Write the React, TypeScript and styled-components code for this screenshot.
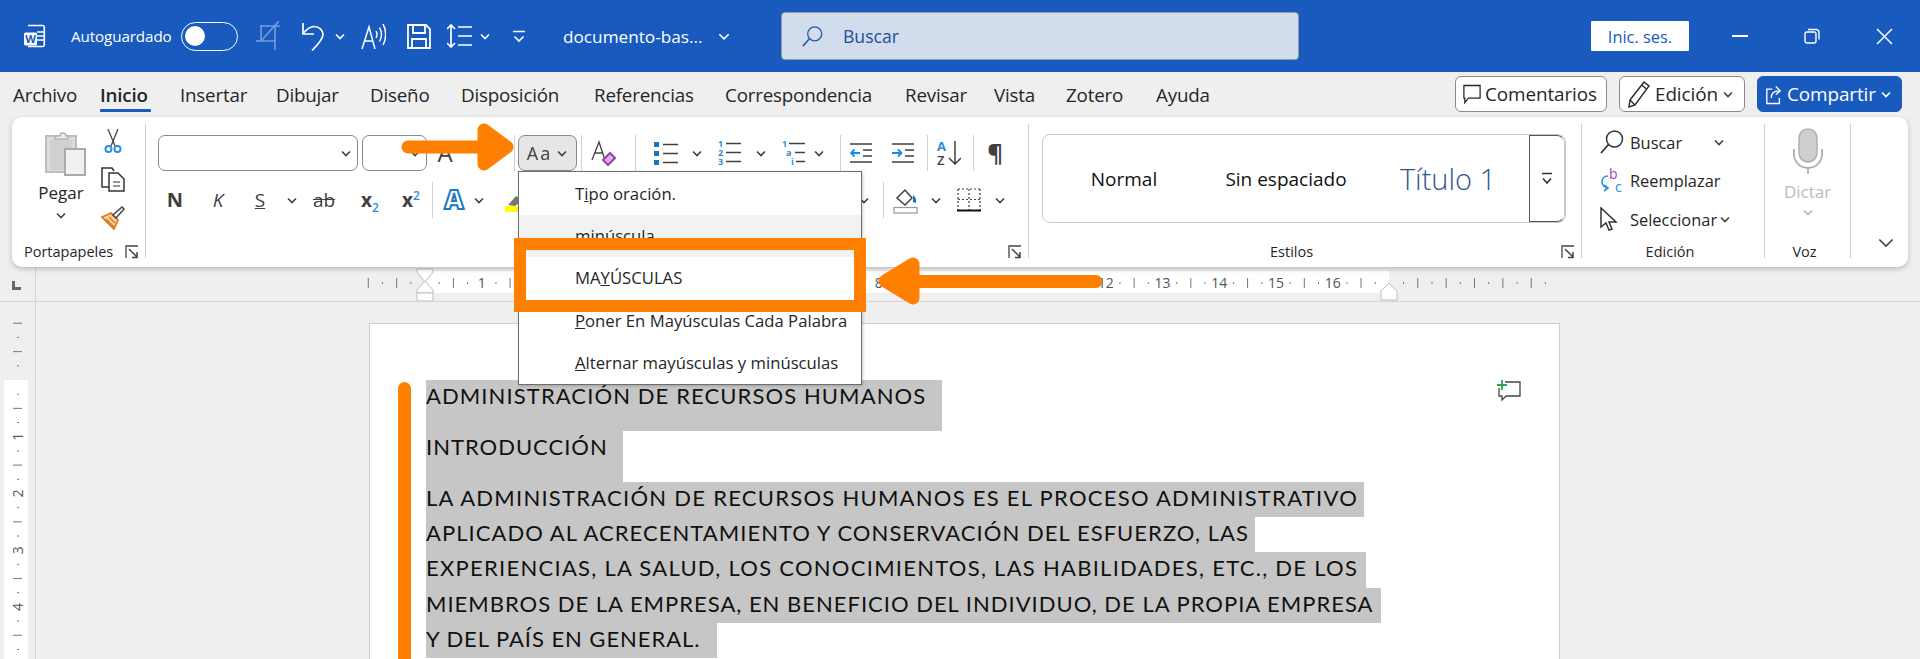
import React from 'react';
import styled, { createGlobalStyle } from 'styled-components';

const ORANGE = '#ff8000';
const Global = createGlobalStyle`
  html, body { margin: 0; padding: 0; background: #efefef; }
  body { font-family: "Open Sans", "Liberation Sans", sans-serif; color: #262626; overflow: hidden; }
  * { box-sizing: border-box; }
`;
const Screen = styled.div`position: relative; width: 1920px; height: 659px; overflow: hidden; display: flex; flex-direction: column; background: #efefef;`;
const TitleBar = styled.header`flex: none; height: 72px; background: #185abd; color: #fff; display: flex; align-items: center; padding-left: 24px;`;
const AutoLabel = styled.span`width: 110px; margin-left: 23px; font-size: 15.2px; letter-spacing: -0.1px; white-space: nowrap;`;
const Toggle = styled.div`width: 57px; height: 29px; border: 1.5px solid #fff; border-radius: 15px; padding: 3px; display: flex; align-items: center;`;
const Knob = styled.span`width: 20px; height: 20px; border-radius: 50%; background: #fff;`;
const Qat = styled.span<{ $ml: number; $w: number; $dim?: boolean }>`
  flex: none; margin-left: ${p => p.$ml}px; width: ${p => p.$w}px; display: flex; justify-content: center; align-items: center; opacity: ${p => (p.$dim ? 0.4 : 1)};
`;
const DocTitle = styled.span`margin-left: 38px; width: 154px; font-size: 17.2px; white-space: nowrap;`;
const SearchBox = styled.div`margin-left: 50px; width: 518px; height: 48px; background: #d1dcec; border: 1.5px solid #8f9aab; border-radius: 4px; display: flex; align-items: center; padding-left: 20px; gap: 20px; color: #1d4f9c; font-size: 17.6px;`;
const SignIn = styled.button`margin-left: auto; width: 98px; height: 30px; border: none; background: #fff; color: #185abd; font: 16.4px "Open Sans", sans-serif; padding: 0; border-radius: 1px;`;
const WindowButtons = styled.div`margin-left: 15px; width: 216px; display: flex; padding-left: 0; align-items: center;`;
const WinBtn = styled.span`width: 72px; display: flex; justify-content: center;`;

const MenuBar = styled.nav`flex: none; height: 45px; display: flex; align-items: flex-start; padding-left: 13px; padding-right: 18px;`;
const Tab = styled.a<{ $w: number; $active?: boolean }>`
  width: ${p => p.$w}px; height: 45px; padding-top: 10px; font-size: 18.8px; line-height: 27px; color: #262626; flex: none; letter-spacing: -0.2px; white-space: nowrap;
  font-weight: ${p => (p.$active ? 600 : 400)};
`;
const TabLine = styled.span`display: block; width: 51px; height: 3px; background: #185abd; border-radius: 1px;`;
const MenuActions = styled.div`margin-left: auto; margin-top: 4px; display: flex; gap: 12px;`;
const ActionBtn = styled.div<{ $w: number; $primary?: boolean }>`
  width: ${p => p.$w}px; height: 36px; border-radius: 6px; display: flex; align-items: center; gap: 4px; padding-left: 7px; font-size: 18.9px; letter-spacing: -0.1px; white-space: nowrap;
  border: 1px solid ${p => (p.$primary ? '#185abd' : '#8a8a8a')};
  background: ${p => (p.$primary ? '#185abd' : '#fff')};
  color: ${p => (p.$primary ? '#fff' : '#262626')};
`;

const Ribbon = styled.section`flex: none; margin: 0 12px; height: 150px; background: #fff; border-radius: 10px; box-shadow: 0 2px 5px rgba(0,0,0,.22); display: flex; padding-top: 7px; position: relative; z-index: 2;`;
const Group = styled.div<{ $w: number; $last?: boolean }>`
  flex: none; width: ${p => p.$w}px; height: 134px; display: flex; flex-direction: column;
  border-right: ${p => (p.$last ? 'none' : '1px solid #d0d0d0')};
`;
const GroupBody = styled.div<{ $pt?: number; $pl?: number }>`flex: 1; min-height: 0; padding-top: ${p => p.$pt ?? 0}px; padding-left: ${p => p.$pl ?? 0}px;`;
const Footer = styled.div<{ $left?: number }>`
  flex: none; height: 14px; margin-bottom: -1px; display: grid; align-items: center; padding-right: 6px; font-size: 14.5px; color: #262626; line-height: 14px;
  grid-template-columns: ${p => (p.$left !== undefined ? `${p.$left}px auto 1fr` : '1fr auto 1fr')};
`;
const FooterEnd = styled.span`justify-self: end; display: flex;`;

const Cols = styled.div`display: flex; padding-left: 14px;`;
const PasteCol = styled.div`width: 70px; display: flex; flex-direction: column; align-items: center; padding-top: 6px; font-size: 17px;`;
const PasteArt = styled.span`width: 50px; padding-left: 8px; display: flex;`;
const PasteText = styled.span`margin-top: 6px; line-height: 22px;`;
const ChevWrap = styled.span<{ $mt?: number }>`display: flex; margin-top: ${p => p.$mt ?? 0}px;`;
const SmallCol = styled.div`width: 34px; display: flex; flex-direction: column; gap: 7px;`;
const SmallTool = styled.span`height: 32px; display: flex; align-items: center; justify-content: center;`;

const ToolRow = styled.div<{ $mt?: number }>`display: flex; align-items: center; height: 36px; margin-top: ${p => p.$mt ?? 0}px;`;
const Combo = styled.div<{ $w: number; $ml?: number }>`flex: none; width: ${p => p.$w}px; margin-left: ${p => p.$ml ?? 0}px; height: 36px; border: 1px solid #8a8a8a; border-radius: 7px; display: flex; justify-content: flex-end; align-items: center; padding-right: 5px;`;
const Tool = styled.span<{ $ml?: number; $w: number }>`
  flex: none; margin-left: ${p => p.$ml ?? 0}px; width: ${p => p.$w}px; display: flex; justify-content: center; align-items: center; color: #404040; white-space: nowrap;
`;
const Glyph = styled.span<{ $size?: number; $bold?: boolean; $italic?: boolean; $u?: boolean; $strike?: boolean }>`
  font-size: ${p => p.$size ?? 19}px; line-height: 1; font-weight: ${p => (p.$bold ? 700 : 400)}; font-style: ${p => (p.$italic ? 'italic' : 'normal')};
  text-decoration: ${p => (p.$u ? 'underline' : p.$strike ? 'line-through' : 'none')}; color: #404040;
`;
const Sub = styled.sub`font-size: 12px; color: #2b8fd6; font-weight: 600; line-height: 0;`;
const Sup = styled.sup`font-size: 12px; color: #2b8fd6; font-weight: 600; line-height: 0;`;
const VSep = styled.span<{ $ml: number }>`flex: none; width: 1px; height: 36px; margin-left: ${p => p.$ml}px; background: #d0d0d0;`;
const CaseBtn = styled.div`flex: none; margin-left: 3px; width: 59px; height: 36px; background: #e6e6e6; border: 1px solid #8a8a8a; border-radius: 7px; display: flex; align-items: center; justify-content: center; gap: 4px; font-size: 18px; letter-spacing: 2px; color: #404040;`;

const StyleBox = styled.div`width: 524px; height: 89px; border: 1px solid #c8c8c8; border-radius: 8px; display: flex; align-items: center; overflow: hidden;`;
const StyleCell = styled.span<{ $w: number; $title?: boolean }>`
  width: ${p => p.$w}px; text-align: center; white-space: nowrap; color: ${p => (p.$title ? '#2f5496' : '#111')};
  font-size: ${p => (p.$title ? 29 : 19)}px; font-weight: ${p => (p.$title ? 300 : 400)};
`;
const StyleScroll = styled.span`margin-left: auto; width: 36px; align-self: stretch; border: 1px solid #555; border-right-color: #c8c8c8; border-radius: 0 8px 8px 0; display: flex; align-items: center; justify-content: center;`;

const EditRows = styled.div`display: flex; flex-direction: column; gap: 2.5px; padding-left: 18px;`;
const EditRow = styled.div`height: 36px; display: flex; align-items: center; font-size: 16.4px; color: #262626;`;
const EditIcon = styled.span`width: 30px; display: flex;`;
const EditChev = styled.span<{ $ml: number }>`margin-left: ${p => p.$ml}px; display: flex;`;
const VoiceCol = styled.div`display: flex; flex-direction: column; align-items: center; padding-top: 4px; font-size: 17px; color: #bcbcbc;`;
const VoiceText = styled.span`margin-top: 7px; line-height: 22px;`;
const VoiceLabel = styled.span`text-align: center; grid-column: 1 / -1; font-size: 14.5px;`;
const CollapseBox = styled.div`height: 100%; display: flex; align-items: flex-end; justify-content: flex-end; padding: 0 12px 6px 0;`;

const RulerRow = styled.div`flex: none; height: 35px; display: flex; border-bottom: 1px solid #d4d4d4;`;
const RulerCorner = styled.div`flex: none; width: 36px; border-right: 1px solid #d4d4d4; padding: 14px 0 0 12px;`;
const CornerMark = styled.span`display: block; width: 9px; height: 9px; border-left: 3px solid #666; border-bottom: 3px solid #666;`;
const Workspace = styled.div`flex: 1; min-height: 0; display: flex;`;
const VRulerCol = styled.div`flex: none; width: 36px; border-right: 1px solid #d4d4d4;`;
const Canvas = styled.main`flex: 1; padding: 21px 0 0 333px;`;
const PageSheet = styled.article`position: relative; width: 1191px; height: 500px; background: #fff; border: 1px solid #cfcfcf; padding: 56px 0 0 56px; font-family: "Lato", "Liberation Sans", sans-serif; font-size: 22px; color: #111;`;
const SelLine = styled.div<{ $w: number; $h?: number; $ls?: number }>`
  width: ${p => p.$w}px; height: ${p => p.$h ?? 35.2}px; background: #c6c6c6; white-space: nowrap; line-height: 31.5px; letter-spacing: ${p => p.$ls ?? 0}px;
`;
const OrangeBar = styled.span`position: absolute; left: 28px; top: 58px; width: 13px; height: 500px; background: ${ORANGE}; border-radius: 7px;`;
const CommentAdd = styled.span`position: absolute; left: 1127px; top: 56px; display: flex;`;

const CaseMenu = styled.div`position: absolute; z-index: 5; left: 518px; top: 171px; width: 344px; height: 214px; background: #fff; border: 1px solid #6e6e6e; box-shadow: 1px 1px 3px rgba(0,0,0,.2); padding-top: 1px;`;
const CaseItem = styled.div<{ $hover?: boolean }>`height: 42.2px; line-height: 42px; padding-left: 56px; font-size: 16.7px; color: #262626; white-space: nowrap; background: ${p => (p.$hover ? '#f2f2f2' : '#fff')};`;
const Highlight = styled.div`position: absolute; z-index: 6; left: 514px; top: 238px; width: 352px; height: 74px; border: 12.5px solid ${ORANGE};`;
const Arrow = styled.svg<{ $left: number; $top: number }>`position: absolute; z-index: 7; left: ${p => p.$left}px; top: ${p => p.$top}px; overflow: visible;`;

const Chev = ({ c = '#404040', s = 12 }: { c?: string; s?: number }) => (
  <svg width={s} height={s} viewBox="0 0 12 12" fill="none" stroke={c} strokeWidth={(1.6 * 12) / s}><polyline points="2,4.5 6,8.5 10,4.5" /></svg>
);
const Launcher = () => (
  <svg width="14" height="14" viewBox="0 0 14 14" fill="none" stroke="#444" strokeWidth="1.3"><path d="M1 13V1h12" /><path d="M4 4l8 8M12 7v5.5H7" strokeWidth="1.5" /></svg>
);
const WordLogo = () => (
  <svg width="24" height="24" viewBox="0 0 24 24">
    <path d="M4 1.5h14.5a1.8 1.8 0 0 1 1.8 1.8v17.4a1.8 1.8 0 0 1-1.8 1.8H4" fill="none" stroke="#fff" strokeWidth="1.6" />
    <path d="M13 8h7M13 12h7M13 16h7" stroke="#fff" strokeWidth="1.3" />
    <rect x="0" y="8.5" width="13" height="13" rx="1.5" fill="#fff" />
    <text x="6.5" y="18.8" fontSize="11" fontWeight="700" textAnchor="middle" fill="#185abd" fontFamily="Open Sans">W</text>
  </svg>
);
const Crop = () => (<svg width="24" height="30" viewBox="0 0 24 30" fill="none" stroke="#fff" strokeWidth="1.6"><path d="M0 20h19M5 4v16M5 5h19M19 5v24M5 20L23 0" /></svg>);
const Undo = () => (<svg width="24" height="30" viewBox="0 0 24 30" fill="none" stroke="#fff" strokeWidth="1.7"><path d="M1 2v11h11" /><path d="M1.5 12C5 8 7.5 5.5 12 5.5c5 0 9 3.5 9 8 0 4-4 9-11 16" /></svg>);
const ReadAloud = () => (<svg width="25" height="30" viewBox="0 0 25 30" fill="none" stroke="#fff" strokeWidth="1.5"><path d="M1 28L8 6l6 22M3.5 20h9" /><path d="M15 10q2 3.5 0 7M18.5 6.5q4 7 0 14M22 3q5.500 10.500 0 21" /></svg>);
const Save = () => (<svg width="24" height="25" viewBox="0 0 24 25" fill="none" stroke="#fff" strokeWidth="1.8"><path d="M1 1h18l4 4v19H1z" /><path d="M6 1v8h12V1M5 24v-9h14v9" /></svg>);
const Spacing = () => (<svg width="25" height="24" viewBox="0 0 25 24" fill="none" stroke="#fff" strokeWidth="1.7"><path d="M4 1v22M0 5l4-4 4 4M0 19l4 4 4-4M11 3h14M11 12h14M11 21h14" /></svg>);
const Customize = () => (<svg width="12" height="13" viewBox="0 0 12 13" fill="none" stroke="#fff" strokeWidth="1.6"><path d="M0 1.500h12M1.500 6.500L6 11l4.500-4.500" /></svg>);
const Lens = ({ c = '#fff', size = 24 }: { c?: string; size?: number }) => (<svg width={size} height={size} viewBox="0 0 24 24" fill="none" stroke={c} strokeWidth="1.5"><circle cx="14.500" cy="9" r="8" /><path d="M8.500 14.500L1 23" strokeWidth="1.8" /></svg>);
const Minimize = () => (<svg width="16" height="3" viewBox="0 0 16 3"><rect width="16" height="2" fill="#fff" /></svg>);
const Restore = () => (<svg width="16" height="16" viewBox="0 0 16 16" fill="none" stroke="#fff" strokeWidth="1.4"><rect x="1" y="4" width="11" height="11" rx="2" /><path d="M4 1.500h8a3 3 0 0 1 3 3v7" /></svg>);
const CloseX = () => (<svg width="17" height="17" viewBox="0 0 17 17" stroke="#fff" strokeWidth="1.5"><path d="M1 1l15 15M16 1L1 16" /></svg>);
const CommentIcon = () => (<svg width="18" height="21" viewBox="0 0 20 22" fill="none" stroke="#262626" strokeWidth="1.4"><path d="M1 1h18v14H6l-4 5v-5H1z" /></svg>);
const PenIcon = () => (<svg width="24" height="28" viewBox="0 0 24 28" fill="none" stroke="#262626" strokeWidth="1.4"><path d="M3 20L17 2l5 4L8 25l-6 2z" /><path d="M14.500 5l5 4M3 20l5 5" /></svg>);
const ShareIcon = () => (<svg width="18" height="21" viewBox="0 0 20 22" fill="none" stroke="#fff" strokeWidth="1.5"><path d="M8 5H2v16h14v-6" /><path d="M7 15c0-5 3-8 8-8M12 2l5 5-5 4" /></svg>);

const PasteIcon = () => (
  <svg width="42" height="46" viewBox="0 0 42 46">
    <rect x="2" y="6" width="30" height="36" fill="#dcdcdc" stroke="#bdbdbd" strokeWidth="2" />
    <rect x="6" y="10" width="22" height="30" fill="#d0d0d0" />
    <path d="M11 9V6h5a3 3 0 0 1 6 0h2v3z" fill="#eee" stroke="#b5b5b5" strokeWidth="1.5" />
    <rect x="21" y="19" width="20" height="26" fill="#f1f1f1" stroke="#aaa" strokeWidth="2" />
  </svg>
);
const CutIcon = () => (<svg width="18" height="25" viewBox="0 0 18 25" fill="none"><path d="M4 1l7 17M14 1L7 18" stroke="#444" strokeWidth="1.3" /><circle cx="4.500" cy="21" r="3" stroke="#2b8fd6" strokeWidth="2" /><circle cx="13.500" cy="21" r="3" stroke="#2b8fd6" strokeWidth="2" /></svg>);
const CopyIcon = () => (<svg width="24" height="25" viewBox="0 0 24 25" fill="none" stroke="#333" strokeWidth="1.5"><path d="M8 20H1V1h10l2 3" /><path d="M8 6h9l6 6v12H8z" /><path d="M12 15h7M12 19h7" strokeWidth="1.2" /></svg>);
const BrushIcon = () => (<svg width="24" height="24" viewBox="0 0 24 24" fill="none"><path d="M1 11l9-4 7 7-4 9z" fill="#f9d4a8" stroke="#e5791a" strokeWidth="1.8" strokeLinejoin="round" /><path d="M5 13l8 8M8 11l6 6" stroke="#e5791a" strokeWidth="1.500" /><path d="M12 9l9-8 2 2-8 9z" fill="#fff" stroke="#444" strokeWidth="1.500" /></svg>);
const ClearFmt = () => (<svg width="25" height="26" viewBox="0 0 25 26" fill="none"><path d="M1 20L8 2l6 18M3.500 13h8" stroke="#444" strokeWidth="1.300" /><path d="M12 20l7-7 5 5-7 7z" fill="#d8b4e2" stroke="#9b3fb5" strokeWidth="2" /></svg>);
const Bullets = () => (<svg width="24" height="24" viewBox="0 0 24 24"><rect x="0" y="1" width="5" height="5" fill="#1b75bc" /><rect x="0" y="10" width="5" height="5" fill="#1b75bc" /><rect x="0" y="19" width="5" height="5" fill="#1b75bc" /><path d="M9 3.500h15M9 12.500h15M9 21.500h15" stroke="#404040" strokeWidth="1.700" /></svg>);
const Numbering = () => (<svg width="24" height="26" viewBox="0 0 24 26"><g fill="#2b8fd6" fontSize="9" fontWeight="700" fontFamily="Open Sans"><text x="0" y="7">1</text><text x="0" y="16">2</text><text x="0" y="25">3</text></g><path d="M8 3.500h15M8 12.500h15M8 21.500h15" stroke="#404040" strokeWidth="1.700" /></svg>);
const Multi = () => (<svg width="24" height="26" viewBox="0 0 24 26"><g fill="#2b8fd6" fontSize="9" fontWeight="700" fontFamily="Open Sans"><text x="0" y="7">1</text><text x="4" y="16">a</text><text x="9" y="25">i</text></g><path d="M7 3.500h16M13 12.500h10M14 21.500h9" stroke="#404040" strokeWidth="1.700" /></svg>);
const Indent = ({ flip }: { flip?: boolean }) => (<svg width="22" height="22" viewBox="0 0 22 22"><path d="M0 2h22M0 20h22M13 8h9M13 14h9" stroke="#404040" strokeWidth="1.700" /><path d={flip ? 'M0 11h9M6 7.500l3.500 3.500-3.500 3.500' : 'M1 11h9M4.500 7.500L1 11l3.500 3.500'} stroke="#1b8ae0" strokeWidth="1.800" fill="none" /></svg>);
const SortAZ = () => (<svg width="24" height="26" viewBox="0 0 24 26"><text x="0" y="11" fontSize="13" fontWeight="700" fill="#2b8fd6" fontFamily="Open Sans">A</text><text x="0" y="25" fontSize="13" fontWeight="600" fill="#404040" fontFamily="Open Sans">Z</text><path d="M18 1v23M12 18l6 6 6-6" stroke="#404040" strokeWidth="1.500" fill="none" /></svg>);
const TextEffect = () => (<svg width="26" height="28" viewBox="0 0 26 28"><text x="13" y="24" textAnchor="middle" fontSize="29" fontWeight="800" fill="#fff" stroke="#1c7ac4" strokeWidth="2.200" fontFamily="Open Sans">A</text></svg>);
const Highlighter = () => (<svg width="24" height="24" viewBox="0 0 24 24"><path d="M3 17l8-9 7 4-8 6z" fill="#777" /><rect x="0" y="18" width="24" height="6" fill="#ffff00" /></svg>);
const Fill = () => (<svg width="25" height="27" viewBox="0 0 25 27" fill="none"><path d="M4 11L12 3l7 8-7 7z" stroke="#404040" strokeWidth="1.500" /><path d="M20 8c3 2 3.500 5 3 8l-3-1z" fill="#1b75bc" /><rect x="1" y="20.500" width="23" height="5.500" stroke="#999" strokeWidth="1.200" /></svg>);
const Borders = () => (<svg width="24" height="24" viewBox="0 0 24 24" fill="none"><path d="M1 1h22M1 1v21M23 1v21M12 1v21M1 11.500h22" stroke="#404040" strokeWidth="1.200" strokeDasharray="2 2" /><path d="M0 22.500h24" stroke="#111" strokeWidth="2" /></svg>);
const StyleMore = () => (<svg width="12" height="14" viewBox="0 0 12 14" fill="none" stroke="#333" strokeWidth="1.600"><path d="M1 1.500h10M2 6.500L6 11l4-4.500" /></svg>);
const ReplaceIcon = () => (<svg width="24" height="27" viewBox="0 0 24 27" fill="none"><text x="9" y="12" fontSize="14" fill="#a83cbc" fontFamily="Open Sans">b</text><text x="15" y="25" fontSize="14" fill="#2b8fd6" fontFamily="Open Sans">c</text><path d="M8 9c-8 0-8 11 0 12M4 18l4 3-4 3" stroke="#2b8fd6" strokeWidth="1.600" /></svg>);
const CursorIcon = () => (<svg width="18" height="25" viewBox="0 0 18 25" fill="none" stroke="#333" strokeWidth="1.500"><path d="M1 1v19l5-4 3 7 3-1-3-7h7z" /></svg>);
const Mic = () => (<svg width="30" height="46" viewBox="0 0 30 46" fill="none"><rect x="6" y="1" width="18" height="33" rx="9" fill="#cfcfcf" stroke="#b0b0b0" strokeWidth="1.500" /><path d="M1 21v5a14 14 0 0 0 28 0v-5M15 40v6" stroke="#b0b0b0" strokeWidth="1.800" /></svg>);
const AddComment = () => (<svg width="24" height="22" viewBox="0 0 24 22" fill="none"><path d="M8 2h15v14H9l-4 4v-4H2V8" stroke="#444" strokeWidth="1.300" /><path d="M5 0v10M0 5h10" stroke="#2da44e" strokeWidth="1.800" /></svg>);

const HRuler = () => {
  const x0 = 389, u = 56.73;
  const items: React.ReactNode[] = [];
  for (let q = -4; q <= 80; q++) {
    const x = x0 + (q * u) / 4;
    if (x > 1512 || q === 0 || q === 68) continue;
    if (q % 4 === 0) {
      const n = q / 4;
      if (n > 0 && n < 17) items.push(<text key={q} x={x} y={21} textAnchor="middle" fontSize="14" fill="#555" fontFamily="Open Sans">{n}</text>);
      else items.push(<path key={q} d={`M${x} 11v10`} stroke="#777" />);
    } else if (q % 2 === 0) items.push(<path key={q} d={`M${x} 11v10`} stroke="#777" />);
    else items.push(<path key={q} d={`M${x} 15v2`} stroke="#777" />);
  }
  return (
    <svg width="1884" height="34" viewBox="0 0 1884 34">
      <rect x={x0} y="4" width="964" height="22" fill="#fff" />
      {items}
      <path d={`M${x0 - 8} 2h16v3l-8 10-8-10z`} fill="#fff" stroke="#bdbdbd" />
      <path d={`M${x0} 14l8 9v3h-16v-3z`} fill="#fff" stroke="#bdbdbd" />
      <rect x={x0 - 8} y="26" width="16" height="8" fill="#fff" stroke="#bdbdbd" />
      <path d={`M${x0 + 964} 16l8 8v9h-16v-9z`} fill="#fff" stroke="#bdbdbd" />
    </svg>
  );
};
const VRuler = () => {
  const y0 = 78, u = 56.73;
  const items: React.ReactNode[] = [];
  for (let q = -4; q <= 20; q++) {
    const y = y0 + (q * u) / 4;
    if (q === 0) continue;
    if (q % 4 === 0 && q > 0) items.push(<text key={q} x={18} y={y + 5} textAnchor="middle" fontSize="14" fill="#555" fontFamily="Open Sans" transform={`rotate(-90 18 ${y})`}>{q / 4}</text>);
    else if (q % 2 === 0) items.push(<path key={q} d={`M13 ${y}h9`} stroke="#777" />);
    else items.push(<path key={q} d={`M17 ${y}h2`} stroke="#777" />);
  }
  return (<svg width="35" height="357" viewBox="0 0 35 357"><rect x="4" y={y0} width="24" height="290" fill="#fff" />{items}</svg>);
};

const tabs: [string, number][] = [['Archivo', 87], ['Inicio', 80], ['Insertar', 96], ['Dibujar', 94], ['Diseño', 91], ['Disposición', 133], ['Referencias', 131], ['Correspondencia', 180], ['Revisar', 89], ['Vista', 72], ['Zotero', 90], ['Ayuda', 60]];

export default function App() {
  return (
    <Screen>
      <Global />
      <TitleBar>
        <WordLogo />
        <AutoLabel>Autoguardado</AutoLabel>
        <Toggle><Knob /></Toggle>
        <Qat $ml={18} $w={24} $dim><Crop /></Qat>
        <Qat $ml={22} $w={24}><Undo /></Qat>
        <Qat $ml={8} $w={12}><Chev c="#fff" /></Qat>
        <Qat $ml={15} $w={25}><ReadAloud /></Qat>
        <Qat $ml={21} $w={24}><Save /></Qat>
        <Qat $ml={16} $w={25}><Spacing /></Qat>
        <Qat $ml={7} $w={12}><Chev c="#fff" /></Qat>
        <Qat $ml={22} $w={12}><Customize /></Qat>
        <DocTitle>documento-bas...</DocTitle>
        <Qat $ml={0} $w={14}><Chev c="#fff" s={14} /></Qat>
        <SearchBox><Lens c="#2a5aa5" size={21} />Buscar</SearchBox>
        <SignIn>Inic. ses.</SignIn>
        <WindowButtons>
          <WinBtn><Minimize /></WinBtn>
          <WinBtn><Restore /></WinBtn>
          <WinBtn><CloseX /></WinBtn>
        </WindowButtons>
      </TitleBar>

      <MenuBar>
        {tabs.map(([t, w]) => (
          <Tab key={t} $w={w} $active={t === 'Inicio'}>{t}{t === 'Inicio' && <TabLine />}</Tab>
        ))}
        <MenuActions>
          <ActionBtn $w={152}><CommentIcon />Comentarios</ActionBtn>
          <ActionBtn $w={126}><PenIcon />Edición<Chev /></ActionBtn>
          <ActionBtn $w={145} $primary><ShareIcon />Compartir<Chev c="#fff" /></ActionBtn>
        </MenuActions>
      </MenuBar>

      <Ribbon>
        <Group $w={134}>
          <GroupBody>
            <Cols>
              <PasteCol><PasteArt><PasteIcon /></PasteArt><PasteText>Pegar</PasteText><ChevWrap $mt={5}><Chev /></ChevWrap></PasteCol>
              <SmallCol>
                <SmallTool><CutIcon /></SmallTool>
                <SmallTool><CopyIcon /></SmallTool>
                <SmallTool><BrushIcon /></SmallTool>
              </SmallCol>
            </Cols>
          </GroupBody>
          <Footer $left={12}><span /><span>Portapapeles</span><FooterEnd><Launcher /></FooterEnd></Footer>
        </Group>

        <Group $w={883}>
          <GroupBody $pt={11} $pl={12}>
            <ToolRow>
              <Combo $w={200}><Chev /></Combo>
              <Combo $w={65} $ml={4}><Chev /></Combo>
              <Tool $w={36}><Glyph $size={24}>A</Glyph></Tool>
              <VSep $ml={51} />
              <CaseBtn>Aa<Chev /></CaseBtn>
              <VSep $ml={4} />
              <Tool $ml={9} $w={25}><ClearFmt /></Tool>
              <VSep $ml={19} />
              <Tool $ml={18} $w={24}><Bullets /></Tool>
              <Tool $ml={13} $w={12}><Chev /></Tool>
              <Tool $ml={15} $w={24}><Numbering /></Tool>
              <Tool $ml={13} $w={12}><Chev /></Tool>
              <Tool $ml={15} $w={24}><Multi /></Tool>
              <Tool $ml={7} $w={12}><Chev /></Tool>
              <VSep $ml={15} />
              <Tool $ml={9} $w={22}><Indent /></Tool>
              <Tool $ml={20} $w={22}><Indent flip /></Tool>
              <VSep $ml={13} />
              <Tool $ml={9} $w={24}><SortAZ /></Tool>
              <VSep $ml={12} />
              <Tool $ml={13} $w={16}><Glyph $size={24} $bold>¶</Glyph></Tool>
            </ToolRow>
            <ToolRow $mt={11}>
              <Tool $ml={7} $w={20}><Glyph $bold $size={20}>N</Glyph></Tool>
              <Tool $ml={23} $w={20}><Glyph $italic $size={19}>K</Glyph></Tool>
              <Tool $ml={22} $w={20}><Glyph $u $size={19}>S</Glyph></Tool>
              <Tool $ml={16} $w={12}><Chev /></Tool>
              <Tool $ml={14} $w={24}><Glyph $strike $size={19}>ab</Glyph></Tool>
              <Tool $ml={24} $w={20}><Glyph $bold $size={19}>x<Sub>2</Sub></Glyph></Tool>
              <Tool $ml={21} $w={20}><Glyph $bold $size={19}>x<Sup>2</Sup></Glyph></Tool>
              <VSep $ml={11} />
              <Tool $ml={9} $w={24}><TextEffect /></Tool>
              <Tool $ml={7} $w={12}><Chev /></Tool>
              <Tool $ml={20} $w={24}><Highlighter /></Tool>
              <Tool $ml={329} $w={12}><Chev /></Tool>
              <VSep $ml={13} />
              <Tool $ml={9} $w={25}><Fill /></Tool>
              <Tool $ml={12} $w={12}><Chev /></Tool>
              <Tool $ml={15} $w={24}><Borders /></Tool>
              <Tool $ml={13} $w={12}><Chev /></Tool>
            </ToolRow>
          </GroupBody>
          <Footer><span /><span>Fuente</span><FooterEnd><Launcher /></FooterEnd></Footer>
        </Group>

        <Group $w={553}>
          <GroupBody $pt={10} $pl={13}>
            <StyleBox>
              <StyleCell $w={162}>Normal</StyleCell>
              <StyleCell $w={162}>Sin espaciado</StyleCell>
              <StyleCell $w={162} $title>Título 1</StyleCell>
              <StyleScroll><StyleMore /></StyleScroll>
            </StyleBox>
          </GroupBody>
          <Footer $left={241}><span /><span>Estilos</span><FooterEnd><Launcher /></FooterEnd></Footer>
        </Group>

        <Group $w={183}>
          <GroupBody>
            <EditRows>
              <EditRow><EditIcon><Lens c="#333" /></EditIcon>Buscar<EditChev $ml={31}><Chev /></EditChev></EditRow>
              <EditRow><EditIcon><ReplaceIcon /></EditIcon>Reemplazar</EditRow>
              <EditRow><EditIcon><CursorIcon /></EditIcon>Seleccionar<EditChev $ml={2}><Chev /></EditChev></EditRow>
            </EditRows>
          </GroupBody>
          <Footer><span /><span>Edición</span><span /></Footer>
        </Group>

        <Group $w={86}>
          <GroupBody>
            <VoiceCol><Mic /><VoiceText>Dictar</VoiceText><ChevWrap $mt={3}><Chev c="#bcbcbc" /></ChevWrap></VoiceCol>
          </GroupBody>
          <Footer><VoiceLabel>Voz</VoiceLabel></Footer>
        </Group>

        <Group $w={57} $last>
          <CollapseBox><Chev s={20} /></CollapseBox>
        </Group>
      </Ribbon>

      <RulerRow>
        <RulerCorner><CornerMark /></RulerCorner>
        <HRuler />
      </RulerRow>
      <Workspace>
        <VRulerCol><VRuler /></VRulerCol>
        <Canvas>
          <PageSheet>
            <OrangeBar />
            <CommentAdd><AddComment /></CommentAdd>
            <SelLine $w={516} $h={51} $ls={1.1}>ADMINISTRACIÓN DE RECURSOS HUMANOS</SelLine>
            <SelLine $w={197} $h={51} $ls={1}>INTRODUCCIÓN</SelLine>
            <SelLine $w={938} $ls={1.26}>LA ADMINISTRACIÓN DE RECURSOS HUMANOS ES EL PROCESO ADMINISTRATIVO</SelLine>
            <SelLine $w={829} $ls={1.05}>APLICADO AL ACRECENTAMIENTO Y CONSERVACIÓN DEL ESFUERZO, LAS</SelLine>
            <SelLine $w={940} $ls={1.27}>EXPERIENCIAS, LA SALUD, LOS CONOCIMIENTOS, LAS HABILIDADES, ETC., DE LOS</SelLine>
            <SelLine $w={955} $ls={1}>MIEMBROS DE LA EMPRESA, EN BENEFICIO DEL INDIVIDUO, DE LA PROPIA EMPRESA</SelLine>
            <SelLine $w={291} $ls={0.95}>Y DEL PAÍS EN GENERAL.</SelLine>
          </PageSheet>
        </Canvas>
      </Workspace>

      <CaseMenu>
        <CaseItem>T<u>i</u>po oración.</CaseItem>
        <CaseItem $hover>minúscula</CaseItem>
        <CaseItem>MA<u>Y</u>ÚSCULAS</CaseItem>
        <CaseItem><u>P</u>oner En Mayúsculas Cada Palabra</CaseItem>
        <CaseItem><u>A</u>lternar mayúsculas y minúsculas</CaseItem>
      </CaseMenu>
      <Highlight />
      <Arrow $left={396} $top={118} width="125" height="58" viewBox="396 118 125 58">
        <path d="M408 147H490" stroke={ORANGE} strokeWidth="13" strokeLinecap="round" />
        <polygon points="484,130 507,147 484,164" fill={ORANGE} stroke={ORANGE} strokeWidth="13" strokeLinejoin="round" />
      </Arrow>
      <Arrow $left={870} $top={250} width="240" height="62" viewBox="870 250 240 62">
        <path d="M1096 281.500H900" stroke={ORANGE} strokeWidth="13" strokeLinecap="round" />
        <polygon points="913,264 885,281 913,298" fill={ORANGE} stroke={ORANGE} strokeWidth="13" strokeLinejoin="round" />
      </Arrow>
    </Screen>
  );
}
